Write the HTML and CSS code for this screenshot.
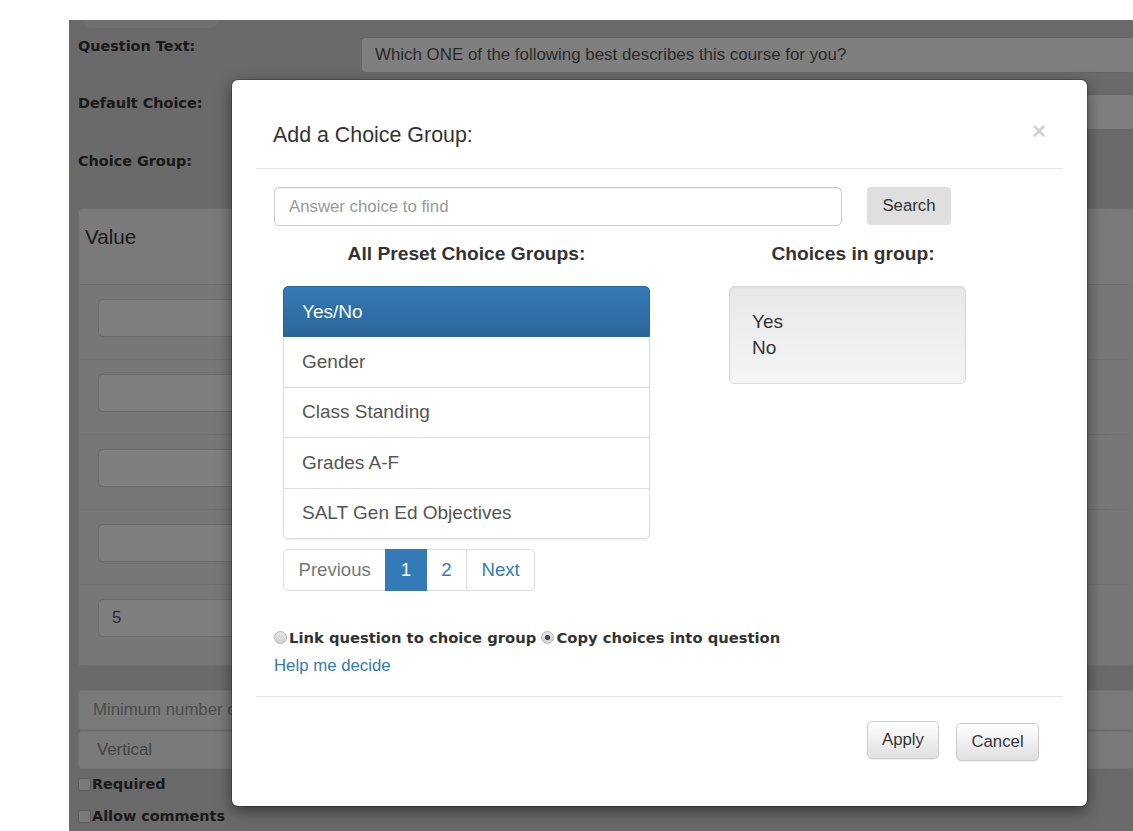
FILE: index.html
```html
<!DOCTYPE html>
<html lang="en">
<head>
<meta charset="utf-8">
<title>Edit Question</title>
<link rel="stylesheet" href="styles.css">
</head>
<body>
<div class="frame">
  <div class="page">
    <div class="top-tab"></div>

    <div class="field-row">
      <label class="field-label">Question Text:</label>
      <input class="field-input" type="text" value="Which ONE of the following best describes this course for you?">
    </div>
    <div class="field-row">
      <label class="field-label">Default Choice:</label>
      <input class="field-input" type="text" value="">
    </div>
    <div class="field-row field-row-wide">
      <label class="field-label">Choice Group:</label>
      <div class="field-spacer"></div>
    </div>

    <div class="value-panel">
      <div class="value-head">Value</div>
      <div class="value-row"><input class="value-input" type="text" value=""></div>
      <div class="value-row"><input class="value-input" type="text" value=""></div>
      <div class="value-row"><input class="value-input" type="text" value=""></div>
      <div class="value-row"><input class="value-input" type="text" value=""></div>
      <div class="value-row value-row-last"><input class="value-input" type="text" value="5"></div>
    </div>

    <input class="wide-input minimum" type="text" placeholder="Minimum number of selections">
    <div class="wide-input layout-select">Vertical</div>

    <label class="check-line check-first"><input type="checkbox" class="check">Required</label>
    <label class="check-line"><input type="checkbox" class="check">Allow comments</label>
  </div>

  <div class="backdrop"></div>

  <div class="modal" role="dialog">
    <div class="modal-header">
      <h4 class="modal-title">Add a Choice Group:</h4>
      <button class="close" type="button">&times;</button>
    </div>

    <div class="modal-body">
      <div class="search-row">
        <input class="search-input" type="text" placeholder="Answer choice to find">
        <button class="search-btn" type="button">Search</button>
      </div>

      <div class="columns">
        <div class="col col-left">
          <h4 class="col-title">All Preset Choice Groups:</h4>
          <div class="list-group">
            <a class="list-item active">Yes/No</a>
            <a class="list-item">Gender</a>
            <a class="list-item">Class Standing</a>
            <a class="list-item">Grades A-F</a>
            <a class="list-item">SALT Gen Ed Objectives</a>
          </div>
          <ul class="pagination">
            <li><span class="page-link disabled">Previous</span></li>
            <li><span class="page-link current">1</span></li>
            <li><a class="page-link">2</a></li>
            <li><a class="page-link">Next</a></li>
          </ul>
        </div>
        <div class="col col-right">
          <h4 class="col-title">Choices in group:</h4>
          <div class="well">
            <div>Yes</div>
            <div>No</div>
          </div>
        </div>
      </div>

      <div class="mode-row">
        <input type="radio" name="mode" class="radio" id="mode-link"><label for="mode-link">Link question to choice group</label>
        <input type="radio" name="mode" class="radio" id="mode-copy" checked><label for="mode-copy">Copy choices into question</label>
      </div>
      <a class="help-link">Help me decide</a>
    </div>

    <div class="modal-footer">
      <button class="btn btn-apply" type="button">Apply</button>
      <button class="btn btn-cancel" type="button">Cancel</button>
    </div>
  </div>
</div>
</body>
</html>
```

FILE: styles.css
```css
* {
  box-sizing: border-box;
}

html,
body {
  margin: 0;
  padding: 0;
  background: #fff;
}

body {
  font-family: "Liberation Sans", Arial, sans-serif;
  font-size: 16.8px;
  color: #333;
}

/* Page area behind the dialog */
.frame {
  position: relative;
  margin: 20px 0 0 69px;
  width: 1064px;
  height: 811px;
  overflow: hidden;
  background: #d4d4d4;
}

.page {
  width: 1200px;
}

.top-tab {
  margin-left: 14px;
  width: 135px;
  height: 8px;
  background: #e0e0e0;
  border-radius: 0 0 8px 8px;
}

.field-row {
  display: flex;
  align-items: flex-start;
  margin-top: 9px;
}

.field-row + .field-row {
  margin-top: 21px;
}

.field-row.field-row-wide {
  margin-top: 22px;
}

.field-label {
  width: 292px;
  flex: none;
  padding-left: 9px;
  font: bold 14.4px/18px "DejaVu Sans", Verdana, sans-serif;
  color: #333;
}

.field-input {
  width: 900px;
  height: 36px;
  border: 1px solid #ccc;
  border-radius: 5px;
  background: #fff;
  padding: 0 13px;
  font: 16.9px "Liberation Sans", Arial, sans-serif;
  color: #555;
}

.field-spacer {
  height: 36px;
}

.value-panel {
  margin: 20px 0 0 9px;
  width: 1150px;
  background: #f5f5f5;
  border: 1px solid #ddd;
  border-radius: 5px;
}

.value-head {
  height: 76px;
  padding: 16px 6px 0;
  font-size: 20.7px;
  line-height: 24px;
  color: #333;
  border-bottom: 1px solid #ddd;
}

.value-row {
  height: 75px;
  padding: 14px 0 0 19px;
  background: #efefef;
  border-bottom: 1px solid #e0e0e0;
}

.value-row-last {
  height: 80px;
  border-bottom: 0;
}

.value-input {
  width: 900px;
  height: 38px;
  border: 1px solid #d6d6d6;
  border-radius: 5px;
  background: #fff;
  padding: 0 13px;
  font: 16.8px "Liberation Sans", Arial, sans-serif;
  color: #555;
}

.wide-input {
  display: block;
  margin-left: 9px;
  width: 1150px;
  border: 1px solid #e6e6e6;
  border-radius: 4px;
  background: #f5f5f5;
  font: 16.8px "Liberation Sans", Arial, sans-serif;
}

.minimum {
  margin-top: 24px;
  height: 40px;
  padding: 0 14px;
}

.minimum::placeholder {
  color: #999;
}

.layout-select {
  margin-top: 1px;
  height: 38px;
  padding: 0 18px;
  line-height: 36px;
  color: #888;
}

.check-line {
  display: flex;
  align-items: center;
  margin-left: 9px;
  height: 18px;
  font: bold 14.4px/18px "DejaVu Sans", Verdana, sans-serif;
  color: #333;
}

.check-first {
  margin-top: 6px;
}

.check-line + .check-line {
  margin-top: 14px;
}

.check {
  appearance: none;
  width: 13px;
  height: 13px;
  margin: 0 1px 0 0;
  border: 1px solid #bbb;
  border-radius: 2px;
  background: #f2f2f2;
}

.backdrop {
  position: absolute;
  inset: 0;
  background: rgba(0, 0, 0, 0.5);
}

/* Dialog */
.modal {
  position: absolute;
  left: 163px;
  top: 60px;
  width: 855px;
  padding: 22px 24px 0;
  background: #fff;
  border-radius: 6px;
  box-shadow: 0 0 0 1px rgba(0, 0, 0, 0.2), 0 5px 15px rgba(0, 0, 0, 0.5);
}

.modal-header {
  display: flex;
  justify-content: space-between;
  align-items: flex-start;
  padding: 20px 17px 20px;
  border-bottom: 1px solid #e5e5e5;
}

.modal-title {
  margin: 0;
  font-size: 21.4px;
  font-weight: normal;
  line-height: 26px;
  color: #333;
}

.close {
  padding: 0;
  margin-top: -1px;
  border: 0;
  background: none;
  font: bold 24px/20px "Liberation Sans", Arial, sans-serif;
  color: #000;
  opacity: 0.18;
}

.modal-body {
  padding: 18px 17px 20px 18px;
}

.search-row {
  display: flex;
  gap: 25px;
  align-items: flex-start;
}

.search-input {
  width: 568px;
  height: 39px;
  padding: 0 14px;
  border: 1px solid #ccc;
  border-radius: 5px;
  box-shadow: inset 0 1px 1px rgba(0, 0, 0, 0.075);
  font: 16.8px "Liberation Sans", Arial, sans-serif;
  color: #555;
}

.search-input::placeholder {
  color: #999;
}

.search-btn {
  width: 84px;
  height: 38px;
  border: 0;
  border-radius: 4px;
  background: #dfdfdf;
  font: 16.8px "Liberation Sans", Arial, sans-serif;
  color: #333;
}

.columns {
  display: grid;
  grid-template-columns: 386px 386px;
}

.col-left {
  padding: 0 10px 0 9px;
}

.col-title {
  margin: 15px 0 21px;
  font-size: 19.2px;
  font-weight: bold;
  line-height: 26px;
  height: 24px;
  text-align: center;
  color: #333;
}

.list-group {
  border-radius: 5px;
  box-shadow: 0 1px 2px rgba(0, 0, 0, 0.075);
}

.list-item {
  display: block;
  padding: 12.7px 18px;
  margin-bottom: -1px;
  border: 1px solid #ddd;
  background: #fff;
  font-size: 19px;
  line-height: 24px;
  color: #555;
}

.list-item:first-child {
  border-radius: 5px 5px 0 0;
}

.list-item:last-child {
  margin-bottom: 0;
  border-radius: 0 0 5px 5px;
}

.list-item.active {
  position: relative;
  background: linear-gradient(to bottom, #337ab7 0, #2b669a 100%);
  border-color: #2b669a;
  color: #fff;
  text-shadow: 0 -1px 0 #286090;
}

.pagination {
  display: inline-flex;
  margin: 10px 0 0;
  padding: 0;
  list-style: none;
}

.page-link {
  display: block;
  padding: 8px 14.5px;
  margin-left: -1px;
  border: 1px solid #ddd;
  background: #fff;
  font-size: 18.6px;
  line-height: 24px;
  color: #337ab7;
}

.pagination li:first-child .page-link {
  margin-left: 0;
  border-radius: 5px 0 0 5px;
}

.pagination li:last-child .page-link {
  border-radius: 0 5px 5px 0;
}

.page-link.disabled {
  color: #777;
}

.page-link.current {
  position: relative;
  background: #337ab7;
  border-color: #337ab7;
  color: #fff;
}

.well {
  margin-left: 69px;
  width: 237px;
  padding: 22px;
  border: 1px solid #dcdcdc;
  border-radius: 5px;
  background: linear-gradient(to bottom, #e8e8e8 0, #f5f5f5 100%);
  box-shadow: inset 0 1px 3px rgba(0, 0, 0, 0.05), 0 1px 0 rgba(255, 255, 255, 0.1);
  font-size: 19px;
  line-height: 26px;
  color: #333;
}

.mode-row {
  margin-top: 37px;
  font: bold 14.75px/20px "DejaVu Sans", Verdana, sans-serif;
  color: #333;
}

.radio {
  appearance: none;
  width: 13px;
  height: 13px;
  margin: 0 2px 0 0;
  vertical-align: -1px;
  border: 1px solid #b4b4b4;
  border-radius: 50%;
  background: linear-gradient(to bottom, #e6e6e6, #d2d2d2);
}

.radio:checked {
  background: radial-gradient(circle, #4a4a4a 0, #4a4a4a 2.2px, transparent 3px), linear-gradient(to bottom, #e6e6e6, #d2d2d2);
}

.help-link {
  display: block;
  margin-top: 8px;
  line-height: 20px;
  color: #337ab7;
  text-decoration: none;
}

.modal-footer {
  display: flex;
  justify-content: flex-end;
  align-items: flex-start;
  gap: 17px;
  padding: 24px 24px 45px;
  border-top: 1px solid #e5e5e5;
}

.btn {
  height: 38px;
  padding: 0;
  border: 1px solid #ccc;
  border-radius: 5px;
  background: linear-gradient(to bottom, #fff 0, #e0e0e0 100%);
  box-shadow: inset 0 1px 0 rgba(255, 255, 255, 0.15), 0 1px 1px rgba(0, 0, 0, 0.075);
  text-shadow: 0 1px 0 #fff;
  font: 16.8px "Liberation Sans", Arial, sans-serif;
  color: #333;
}

.btn-apply {
  width: 72px;
}

.btn-cancel {
  width: 83px;
  margin-top: 2px;
}
```
